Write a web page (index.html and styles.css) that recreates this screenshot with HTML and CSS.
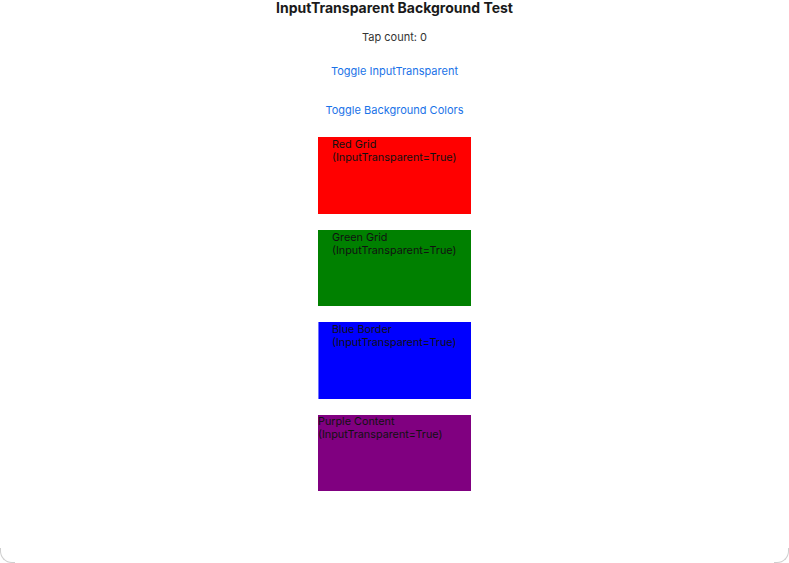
FILE: index.html
```html
<!DOCTYPE html>
<html>
<head>
<meta charset="utf-8">
<link rel="stylesheet" href="styles.css">
</head>
<body>
<div class="window">
  <h1 class="title">InputTransparent Background Test</h1>
  <div class="count">Tap count: 0</div>
  <button class="link link-first">Toggle InputTransparent</button>
  <button class="link link-second">Toggle Background Colors</button>
  <div class="boxes">
    <div class="box red"><span class="label padded">Red Grid<br>(InputTransparent=True)</span></div>
    <div class="box green"><span class="label padded">Green Grid<br>(InputTransparent=True)</span></div>
    <div class="box blue"><span class="label padded">Blue Border<br>(InputTransparent=True)</span></div>
    <div class="box purple"><span class="label">Purple Content<br>(InputTransparent=True)</span></div>
  </div>
</div>
</body>
</html>
```
FILE: styles.css
```css
html, body {
  margin: 0;
  padding: 0;
  background: #ffffff;
}
body {
  font-family: Inter, "Liberation Sans", sans-serif;
  width: 789px;
  height: 563px;
  overflow: hidden;
}
.window {
  position: relative;
  box-sizing: border-box;
  width: 789px;
  height: 563px;
  display: flex;
  flex-direction: column;
  align-items: center;
}
.window::before,
.window::after {
  content: "";
  position: absolute;
  bottom: 0;
  width: 14px;
  height: 14px;
  border-bottom: 1px solid #cfcfcf;
}
.window::before {
  left: 0;
  border-left: 1px solid #cfcfcf;
  border-bottom-left-radius: 12px;
}
.window::after {
  right: 0;
  border-right: 1px solid #cfcfcf;
  border-bottom-right-radius: 12px;
}
.title {
  margin: 0;
  font-size: 14px;
  font-weight: 700;
  color: #1a1a1a;
  line-height: 15px;
  height: 15px;
}
.count {
  margin-top: 15px;
  font-size: 11px;
  color: #333333;
  line-height: 14px;
}
.link {
  font-family: inherit;
  background: none;
  border: none;
  padding: 0;
  font-size: 11px;
  color: #1a73e8;
  line-height: 14px;
}
.link-first {
  margin-top: 20px;
}
.link-second {
  margin-top: 25px;
}
.boxes {
  margin-top: 20px;
  display: flex;
  flex-direction: column;
  gap: 16px;
}
.box {
  box-sizing: border-box;
  width: 153px;
  height: 76.5px;
}
.label {
  display: block;
  font-size: 10.8px;
  line-height: 13px;
  color: #111111;
}
.padded {
  padding-left: 14px;
  padding-top: 1px;
}
.red { background: #ff0000; }
.green { background: #008000; }
.blue { background: #0000ff; border-left: 1px solid #6f6fff; }
.blue .padded { padding-left: 13px; }
.purple { background: #800080; }
```
